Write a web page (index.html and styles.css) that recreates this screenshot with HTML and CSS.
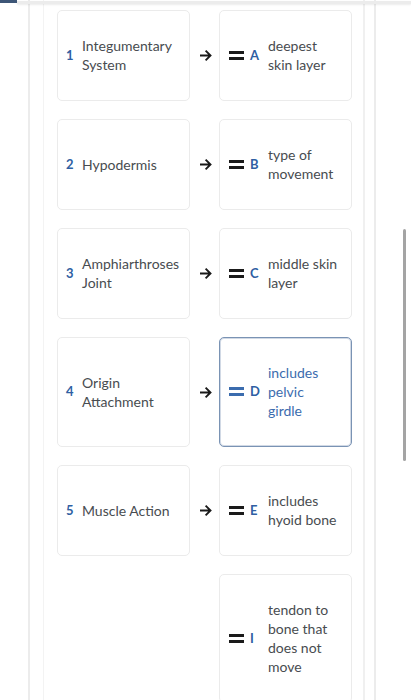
FILE: index.html
```html
<!DOCTYPE html>
<html>
<head>
<meta charset="utf-8">
<link rel="stylesheet" href="styles.css">
</head>
<body>
<div class="topbar"><div class="tab"></div><div class="shade"></div></div>
<div class="outer">
  <div class="inner">
    <div class="row">
      <div class="card"><span class="num">1</span><span class="txt">Integumentary<br>System</span></div>
      <div class="arrow"><svg width="13" height="13" viewBox="0 0 13 13"><path d="M1 6.5H11.5M6.6 1.6L11.5 6.5L6.6 11.4" fill="none" stroke="#1a1a1a" stroke-width="1.9"/></svg></div>
      <div class="card"><span class="eq"></span><span class="let">A</span><span class="txt">deepest<br>skin layer</span></div>
    </div>
    <div class="row">
      <div class="card"><span class="num">2</span><span class="txt">Hypodermis</span></div>
      <div class="arrow"><svg width="13" height="13" viewBox="0 0 13 13"><path d="M1 6.5H11.5M6.6 1.6L11.5 6.5L6.6 11.4" fill="none" stroke="#1a1a1a" stroke-width="1.9"/></svg></div>
      <div class="card"><span class="eq"></span><span class="let">B</span><span class="txt">type of<br>movement</span></div>
    </div>
    <div class="row">
      <div class="card"><span class="num">3</span><span class="txt">Amphiarthroses<br>Joint</span></div>
      <div class="arrow"><svg width="13" height="13" viewBox="0 0 13 13"><path d="M1 6.5H11.5M6.6 1.6L11.5 6.5L6.6 11.4" fill="none" stroke="#1a1a1a" stroke-width="1.9"/></svg></div>
      <div class="card"><span class="eq"></span><span class="let">C</span><span class="txt">middle skin<br>layer</span></div>
    </div>
    <div class="row">
      <div class="card"><span class="num">4</span><span class="txt">Origin<br>Attachment</span></div>
      <div class="arrow"><svg width="13" height="13" viewBox="0 0 13 13"><path d="M1 6.5H11.5M6.6 1.6L11.5 6.5L6.6 11.4" fill="none" stroke="#1a1a1a" stroke-width="1.9"/></svg></div>
      <div class="card active"><span class="eq"></span><span class="let">D</span><span class="txt">includes<br>pelvic<br>girdle</span></div>
    </div>
    <div class="row">
      <div class="card"><span class="num">5</span><span class="txt">Muscle Action</span></div>
      <div class="arrow"><svg width="13" height="13" viewBox="0 0 13 13"><path d="M1 6.5H11.5M6.6 1.6L11.5 6.5L6.6 11.4" fill="none" stroke="#1a1a1a" stroke-width="1.9"/></svg></div>
      <div class="card"><span class="eq"></span><span class="let">E</span><span class="txt">includes<br>hyoid bone</span></div>
    </div>
    <div class="row">
      <div class="empty"></div>
      <div class="arrow"></div>
      <div class="card"><span class="eq"></span><span class="let">I</span><span class="txt">tendon to<br>bone that<br>does not<br>move</span></div>
    </div>
  </div>
</div>
<div class="scrollbar"></div>
</body>
</html>
```
FILE: styles.css
```css
html, body {
  margin: 0;
  padding: 0;
  background: #ffffff;
  height: 700px;
  overflow: hidden;
}
body {
  font-family: "Lato", "Liberation Sans", sans-serif;
  font-size: 14px;
  color: #484c50;
  position: relative;
}
.topbar {
  display: flex;
  height: 4px;
  position: absolute;
  top: 0;
  left: 0;
  right: 0;
  z-index: 2;
}
.tab {
  width: 17px;
  height: 3px;
  background: #3d5677;
}
.shade {
  flex: 1;
  height: 3px;
  margin-top: 1px;
  background: #ececec;
  box-shadow: 0 1px 2px rgba(0,0,0,0.08);
}
.outer {
  margin-left: 28px;
  width: 348px;
  border-left: 2px solid #ececec;
  border-right: 2px solid #ececec;
  height: 700px;
  box-sizing: border-box;
}
.inner {
  margin-left: 13px;
  width: 322px;
  border-left: 1px solid #f3f3f3;
  border-right: 2px solid #f0f0f0;
  height: 700px;
  box-sizing: border-box;
  padding: 10px 12px 0 13px;
  display: flex;
  flex-direction: column;
  gap: 18px;
}
.row {
  display: grid;
  grid-template-columns: 133px 29px 133px;
}
.card {
  border: 1px solid #ebebeb;
  border-radius: 5px;
  padding: 25px 8px 26px;
  min-height: 38px;
  display: flex;
  align-items: center;
  line-height: 19px;
}
.card.active {
  border: 1px solid #7a93b4;
  box-shadow: inset 0 0 0 1px rgba(122, 147, 180, 0.35);
  color: #3b6cae;
}
.num {
  color: #2f5fa3;
  font-weight: 700;
  font-size: 13px;
  width: 16px;
  flex: none;
}
.eq {
  width: 15px;
  height: 9px;
  flex: none;
  border-top: 3px solid #1a1a1a;
  border-bottom: 3px solid #1a1a1a;
  box-sizing: border-box;
  margin-left: 1px;
  margin-right: 6px;
}
.card.active .eq {
  border-color: #3b6cae;
}
.let {
  color: #2f5fa3;
  font-weight: 700;
  font-size: 13px;
  width: 18px;
  flex: none;
}
.txt {
  display: block;
}
.arrow {
  display: flex;
  align-items: center;
  justify-content: center;
  padding-left: 1px;
}
.arrow svg {
  display: block;
}
.scrollbar {
  position: absolute;
  left: 403px;
  top: 229px;
  width: 3px;
  height: 232px;
  border-radius: 2px;
  background: #a4a4a4;
}
```
